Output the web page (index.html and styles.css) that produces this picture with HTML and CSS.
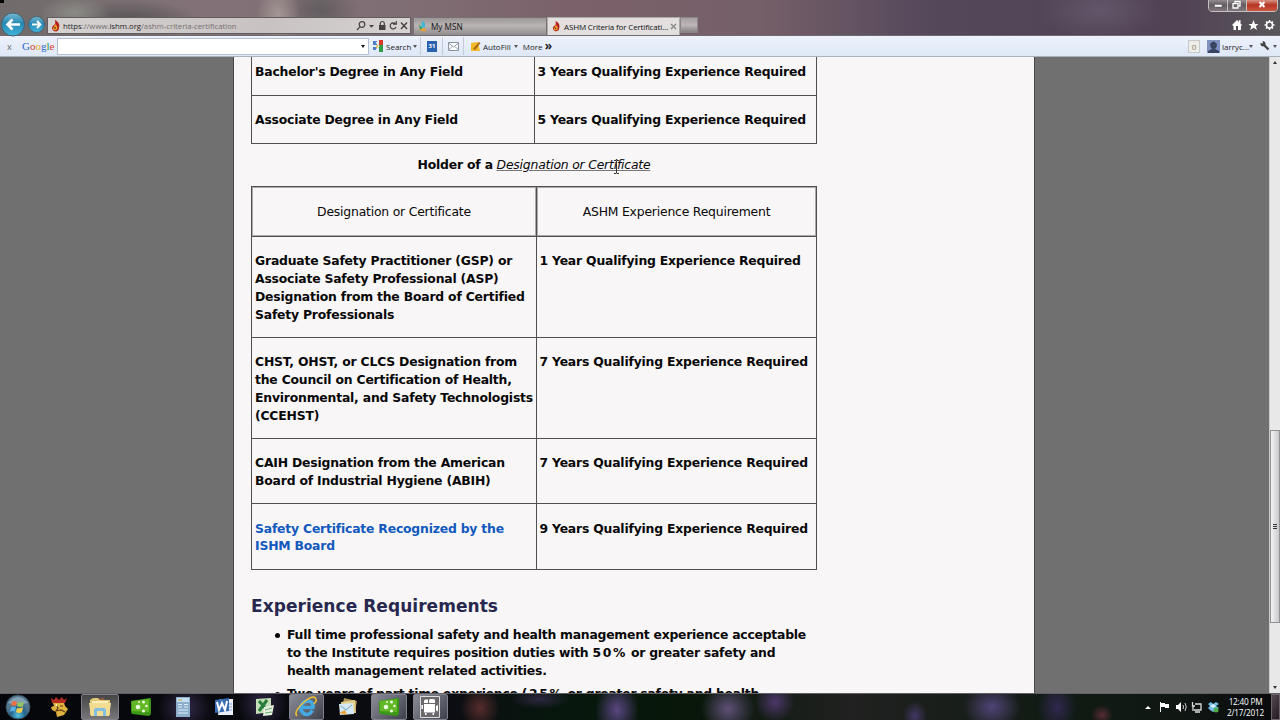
FILE: index.html
```html
<!DOCTYPE html>
<html lang="en">
<head>
    <meta charset="UTF-8">
    <title>ASHM Criteria for Certification</title>
    <link rel="stylesheet" href="styles.css">
</head>
<body>
    <svg class="defs" width="0" height="0">
        <symbol id="flame" viewBox="0 0 10 12">
            <path d="M4 0C8 2 9 5 8 8C8 11 5 12 3 11C0 9 1 6 3 5C5 4 4 2 4 0Z" fill="#b5221b"/>
            <path d="M4 4C7 6 7 10 5 10C2 11 1 8 3 7Z" fill="#f0a12c"/>
            <path d="M4 7L5 8L4 9L3 8Z" fill="#431613"/>
        </symbol>
        <symbol id="camtasia" viewBox="0 0 22 22">
            <path d="M1 5L20 2Q21 2 21 4V18L19 20L2 18Q1 17 1 15Z" fill="#3c9618"/>
            <path d="M2 5L19 3V16L2 15Z" fill="#63b827"/>
            <g fill="#e9f8dc"><circle cx="8" cy="11" r="2.3"/><circle cx="13.500" cy="6" r="1.5"/><circle cx="16.500" cy="10" r="1.3"/><circle cx="13.500" cy="15" r="1.6"/><circle cx="9" cy="6" r="1"/></g>
        </symbol>
    </svg>

    <div class="window">
        <header class="chrome">
            <div class="navbar">
                <svg class="history" width="47" height="25" viewBox="0 0 47 25">
                    <defs>
                        <linearGradient id="blue" x2="0" y2="1"><stop stop-color="#79b9d2"/><stop offset=".45" stop-color="#2489b4"/><stop offset="1" stop-color="#45b4d9"/></linearGradient>
                    </defs>
                    <circle cx="13" cy="12.5" r="11.5" fill="url(#blue)" stroke="#46616e"/>
                    <path d="M20 12.5H8M12.5 7.5L7.5 12.5L12.5 17.5" fill="none" stroke="#fff" stroke-width="2.6"/>
                    <circle cx="36.5" cy="12.5" r="8" fill="url(#blue)" stroke="#46616e"/>
                    <path d="M32 12.5H40M37 9L40.5 12.5L37 16" fill="none" stroke="#fff" stroke-width="1.9"/>
                </svg>
                <div class="address">
                    <svg class="favicon" width="10" height="12"><use href="#flame"/></svg>
                    <div class="url"><b>https</b>://www.<b>ishm.org</b>/ashm-criteria-certification</div>
                    <svg width="54" height="12" viewBox="0 0 54 12" fill="none" stroke="#454244" stroke-width="1.2">
                        <circle cx="6" cy="4.5" r="2.8"/><path d="M4 6.7L1 10"/>
                        <path d="M13 5h5l-2.5 2.7z" fill="#454244" stroke="none"/>
                        <rect x="23" y="5" width="6.5" height="5" fill="#454244" stroke="none"/><path d="M24.3 5V3.5a2 2 0 0 1 4 0V5"/>
                        <path d="M39.5 4A3 3 0 1 0 40 7M37 4.2H40.3V1"/>
                        <path d="M45 2.5L51 9M51 2.5L45 9" stroke-width="1.4"/>
                    </svg>
                </div>
                <div class="tab">
                    <svg width="10" height="12" viewBox="0 0 10 12"><path d="M5 6L1 9Q4 11 9 10L5 6Z" fill="#e4a033"/><path d="M4 0Q8 1 7 6L3 8Z" fill="#43b6d5"/><path d="M1 3L4 7L2 9Z" fill="#31a05c"/></svg>
                    <span>My MSN</span>
                </div>
                <div class="tab active">
                    <svg width="9" height="11"><use href="#flame"/></svg>
                    <span>ASHM Criteria for Certificati...</span>
                    <svg class="tab-close" width="7" height="7" viewBox="0 0 7 7"><path d="M1 1L6 6M6 1L1 6" stroke="#888" stroke-width="1.3"/></svg>
                </div>
                <div class="new-tab"></div>
                <svg class="browser-tools" width="43" height="14" viewBox="0 0 43 14" fill="#fff">
                    <path d="M0 7L5 2L7 4V2H8.5V5.5L10 7L9 8V12H6V8H4V12H1.5V8Z"/>
                    <path d="M21.5 2L23 6H26.5L23.8 8.2L25 12L21.5 9.8L18.2 12L19.2 8.2L16.5 6H20Z"/>
                    <circle cx="37.5" cy="7" r="3" fill="none" stroke="#fff" stroke-width="1.5"/>
                    <path d="M37.5 2V4M37.5 10V12M32.5 7H34.5M40.5 7H42.5M34 3.5L35.5 5M41 3.5L39.5 5M34 10.5L35.5 9M41 10.5L39.5 9" stroke="#fff" stroke-width="1.5"/>
                </svg>
                <div class="caption-buttons">
                    <i><svg width="18" height="11" viewBox="0 0 18 11"><path d="M5.5 4.5H13V7H5.5Z" fill="#fff" stroke="#555" stroke-width=".5"/></svg></i>
                    <i><svg width="18" height="11" viewBox="0 0 18 11" fill="none" stroke="#fff" stroke-width="1.3"><path d="M7 3V1.5H12V6H10.5"/><path d="M5 3.7H10V8H5Z"/></svg></i>
                    <i class="close"><svg width="30" height="11" viewBox="0 0 30 11"><path d="M12.5 2L17.5 7M17.5 2L12.5 7" stroke="#fff" stroke-width="2"/></svg></i>
                </div>
            </div>
            <div class="toolbar">
                <span class="toolbar-close">x</span>
                <span class="google"><b>G</b><b>o</b><b>o</b><b>g</b><b>l</b><b>e</b></span>
                <div class="search-box"><span class="caret dark"></span></div>
                <div class="tool search">
                    <svg width="12" height="12" viewBox="0 0 12 12"><path d="M1 1H5V5H1ZM1 7H5V10H1Z" fill="#4c7ccc"/><path d="M5 4H8V8H4Z" fill="#e8b840"/><path d="M7 0H11V5H7Z" fill="#d53b2c"/><path d="M7 5H11V12H7Z" fill="#2f9c4b"/><path d="M4 2L7 6L4 10" stroke="#fff" fill="none"/></svg>
                    <span>Search</span><span class="caret"></span>
                </div>
                <div class="tool calendar"><span>31</span></div>
                <div class="tool mail">
                    <svg width="11" height="9" viewBox="0 0 11 9" fill="#fff" stroke="#8995a3"><path d="M.5 .5H10.5V8.5H.5Z"/><path d="M.5 1L5.5 5L10.5 1M.5 8L4 4.5M10.5 8L7 4.5" fill="none"/></svg>
                </div>
                <div class="tool autofill">
                    <svg width="11" height="11" viewBox="0 0 11 11"><path d="M1 2L8 1L10 10H1Z" fill="#f4b929"/><path d="M3 8L9 1L10.5 2L5 9Z" fill="#a76916"/></svg>
                    <span>AutoFill</span><span class="caret"></span>
                </div>
                <div class="more">More <b>»</b></div>
                <span class="count">0</span>
                <svg class="avatar" width="13" height="13" viewBox="0 0 13 13"><path d="M0 0H13V13H0Z" fill="#7f91c0"/><path d="M3 4Q6.500 -1 10 4Q10 7 8 9L12 11V13H1V11L5 9Q3 7 3 4Z" fill="#39445f"/></svg>
                <span class="user">larryc...</span><span class="caret user-caret"></span>
                <svg class="wrench" width="10" height="10" viewBox="0 0 10 10"><path d="M3.500 3.500L8.500 8.500" stroke="#444" stroke-width="2.4"/><path d="M2.500 0L3 2.500L.5 2Q0 5 3 5.500Q6 5 5.500 2Q4.500 0 2.500 0Z" fill="#444"/></svg>
                <span class="caret"></span>
            </div>
        </header>

        <main class="viewport">
            <article class="page">
                <table class="degrees">
                    <tr><td>Bachelor's Degree in Any Field</td><td>3 Years Qualifying Experience Required</td></tr>
                    <tr><td>Associate Degree in Any Field</td><td>5 Years Qualifying Experience Required</td></tr>
                </table>
                <p class="holder"><b>Holder of a</b> <span class="underlined">Designation or Certificate<svg class="cursor" width="7" height="14" viewBox="0 0 7 14"><path d="M1 .5H3L3.500 1L4 .5H6M3.500 1V13M1 13.500H3L3.500 13L4 13.500H6" fill="none" stroke="#333"/></svg></span></p>
                <table class="designations">
                    <tr><th>Designation or Certificate</th><th>ASHM Experience Requirement</th></tr>
                    <tr class="tall"><td>Graduate Safety Practitioner (GSP) or<br>Associate Safety Professional (ASP)<br>Designation from the Board of Certified<br>Safety Professionals</td><td>1 Year Qualifying Experience Required</td></tr>
                    <tr class="tall"><td>CHST, OHST, or CLCS Designation from<br>the Council on Certification of Health,<br>Environmental, and Safety Technologists<br>(CCEHST)</td><td>7 Years Qualifying Experience Required</td></tr>
                    <tr class="short"><td>CAIH Designation from the American<br>Board of Industrial Hygiene (ABIH)</td><td>7 Years Qualifying Experience Required</td></tr>
                    <tr class="short"><td><a>Safety Certificate Recognized by the<br>ISHM Board</a></td><td>9 Years Qualifying Experience Required</td></tr>
                </table>
                <h2>Experience Requirements</h2>
                <ul>
                    <li>Full time professional safety and health management experience acceptable<br>to the Institute requires position duties with <span class="percent">50%</span> or greater safety and<br>health management related activities.</li>
                    <li>Two years of part time experience <span class="percent">(25%</span> or greater safety and health</li>
                </ul>
            </article>
            <div class="scrollbar">
                <span class="arrow up"></span>
                <div class="thumb"><i></i><i></i><i></i></div>
                <span class="arrow down"></span>
            </div>
        </main>

        <footer class="taskbar">
            <div class="start">
                <svg width="26" height="26" viewBox="0 0 26 26">
                    <defs><radialGradient id="orb" cy=".85"><stop stop-color="#58c4de"/><stop offset=".6" stop-color="#24638c"/><stop offset="1" stop-color="#54778f"/></radialGradient></defs>
                    <circle cx="13" cy="13" r="12" fill="url(#orb)" stroke="#314958"/>
                    <path d="M3 9Q13 -3 23 9Q13 12 3 9Z" fill="#b4cbd6" opacity=".5"/>
                    <path d="M7 8Q9 6 12 8L11 12Q9 11 6 12Z" fill="#ed7042"/><path d="M13 8Q16 10 19 8L18 12Q15 14 12 12Z" fill="#92c85a"/><path d="M6 13Q9 12 11 13L10 18Q8 16 5 18Z" fill="#5baee4"/><path d="M12 14Q15 15 18 13L17 18Q14 20 11 18Z" fill="#f5cd4c"/>
                </svg>
            </div>
            <nav class="apps">
                <div><svg width="20" height="22" viewBox="0 0 20 22"><path d="M4 7H15L16 10L19 13L15 19L8 21L7 16L3 14L2 11L5 10Z" fill="#deb33e"/><path d="M2 2L5 4L7 1L10 4L13 1L15 4L18 2L16 7H3Z" fill="#b52c20"/><path d="M7 9L9 12L7 15L12 14L16 16M11 10H14" stroke="#5e3a1b" stroke-width="1.2" fill="none"/><path d="M6 9L8 8V11Z" fill="#fff5d8"/></svg></div>
                <div class="open bright"><svg width="24" height="22" viewBox="0 0 24 22"><path d="M2 4L5 2H10L12 4H22V19H2Z" fill="#e3c775"/><path d="M4 5H20V9H4Z" fill="#fff0bd"/><path d="M1 7H23L21 20H3Z" fill="#f1dc91"/><path d="M6 20V14Q6 12 8 12H16Q18 12 18 14V20H15V15H9V20Z" fill="#82bfe0"/><path d="M12 3H16" stroke="#cf5e36"/></svg></div>
                <div><svg width="22" height="22"><use href="#camtasia"/></svg></div>
                <div><svg width="18" height="22" viewBox="0 0 18 22"><path d="M2 1H16V21H2Z" fill="#8caecb"/><path d="M3 2H15V6H3Z" fill="#c6e0f2"/><path d="M4 8.500H8M4 11H8M10 8.500H14M10 11H14M4 14H14M4 17H14" stroke="#dcecf8" stroke-width="1.2"/><path d="M4 4H8" stroke="#bc9b3b"/></svg></div>
                <div><svg width="20" height="20" viewBox="0 0 20 20"><path d="M6 2H19V18H4Z" fill="#e9f0f9"/><path d="M13 7H18M13 10H18M12 13H18" stroke="#82a4d0"/><path d="M1 3L15 1V14L1 16Z" fill="#386db2"/><path d="M3 5L5 13L8 6L11 13L13 4" stroke="#fff" stroke-width="2" fill="none"/></svg></div>
                <div><svg width="20" height="20" viewBox="0 0 20 20"><path d="M1 2L16 1V15L1 17Z" fill="#c3ddb8"/><path d="M4 4L13 14M12 3L4 14" stroke="#267c39" stroke-width="3"/><path d="M9 10L19 8L17 18L8 19Z" fill="#e6f1df"/><path d="M10 13L17 11M10 16L17 15" stroke="#67a773"/></svg></div>
                <div class="open"><svg width="24" height="22" viewBox="0 0 24 22"><path d="M18.500 14.500Q14 21 9 17Q4 12 9 7Q14 3 18 7Q19.500 9 19 11.500H8" stroke="#43a9e2" stroke-width="3.600" fill="none"/><path d="M3 20Q-1 16 10 6Q20 -2 22 3Q23 5 20 8" stroke="#edbc35" stroke-width="1.600" fill="none"/></svg></div>
                <div><svg width="22" height="20" viewBox="0 0 22 20"><path d="M7 1L20 4L18 15L5 12Z" fill="#ae945c"/><path d="M4 5L18 3L19 16L5 17Z" fill="#e5cf85"/><path d="M2 7L16 6L17 17L3 18Z" fill="#d4e8f5"/><path d="M4 9L9 13L15 8" stroke="#7c9fb8" fill="none"/><path d="M2 16L8 13L10 18Z" fill="#e9a73d"/></svg></div>
                <div class="open"><svg width="22" height="22"><use href="#camtasia"/></svg></div>
                <div class="open"><svg width="22" height="22" viewBox="0 0 22 22"><path d="M1.500 .5H20.500V21.500H1.500Z" fill="#6b696c" stroke="#ddd"/><path d="M5 8H16V16.500H5ZM17 10L19 9V15.500L17 14.500ZM2.500 9H4V13H2.500ZM6 17V19H7.500V17M13.500 17V19H15V17" fill="#fff"/><path d="M5 7V5Q5 3.500 6.500 3.500H9V7ZM10 7V4.500Q10 3 11.500 3H14.500Q16 3 16 4.500V7Z" fill="#fff"/></svg></div>
            </nav>
            <svg class="tray" width="76" height="14" viewBox="0 0 76 14">
                <path d="M1 9L4 6L7 9Z" fill="#fff"/>
                <path d="M16.500 2V12" stroke="#fff"/><path d="M17 3H21V4H25V8H21V7H17Z" fill="#fff"/>
                <path d="M32 5H34L37 2V12L34 9H32Z" fill="#fff"/><path d="M39 5Q40 7 39 9M41 3Q43.500 7 41 11" fill="none" stroke="#ccc"/>
                <path d="M51 4H57V10H50M48.500 2V6H51M49 6V11M51 12H56" fill="none" stroke="#ddd" stroke-width="1.300"/>
                <path d="M64 4L67 2L69 4L72 2L75 4L72 6L75 8L72 10L69 12L66 10L64 8L66 6Z" fill="#72bce8"/><path d="M69 4L66 6L69 8L72 6Z" fill="#d8efff"/><circle cx="72" cy="10" r="2.500" fill="#50ac48"/>
            </svg>
            <div class="clock">12:40 PM<br>2/17/2012</div>
            <div class="show-desktop"></div>
        </footer>
    </div>
</body>
</html>
```
FILE: styles.css
```css
* {
    box-sizing: border-box;
}
body {
    margin: 0;
    font-family: "Open Sans", "Noto Sans", sans-serif;
    overflow: hidden;
}
svg {
    display: block;
    flex: none;
}
.defs {
    position: absolute;
}
.window {
    width: 1280px;
    height: 720px;
    display: flex;
    flex-direction: column;
}

/* browser chrome */
.chrome {
    height: 57px;
    flex: none;
    background:
        linear-gradient(#000, #000) 0 0 / 4px 3px no-repeat,
        radial-gradient(ellipse 22px 30px at 278px 15px, #a39694, transparent),
        radial-gradient(ellipse 35px 17px at 75px 13px, #8b8b86, transparent),
        radial-gradient(ellipse 70px 20px at 130px 20px, #565356, transparent),
        radial-gradient(ellipse 40px 25px at 320px 10px, #615c5f, transparent),
        radial-gradient(ellipse 60px 30px at 1100px 10px, #62566a, transparent),
        linear-gradient(90deg, #706b6a, #827277 200px, #806e75 400px, #7b6169 580px, #755f69 760px, #53475a 940px, #514354 1180px, #59565a 1280px);
}
.navbar {
    height: 36px;
    padding-top: 17px;
    display: flex;
    position: relative;
    border-bottom: 1px solid #706b70;
}
.history {
    margin-top: -5px;
}
.address {
    width: 364px;
    height: 17px;
    display: flex;
    align-items: center;
    padding: 0 0 0 3px;
    background: linear-gradient(90deg, #d6d2d2, #c8c2c2 60%, #d7d3d2);
    border: 1px solid #625d5f;
    color: #75706f;
}
.favicon {
    margin-right: 2px;
}
.url {
    flex: 1;
    white-space: nowrap;
    font-size: 7.8px;
    letter-spacing: -.03px;
}
.url b {
    font-weight: 500;
    color: #222;
}
.tab {
    width: 134px;
    height: 18px;
    margin-left: 2px;
    padding-left: 4px;
    display: flex;
    align-items: center;
    gap: 3px;
    background: linear-gradient(#9b9797, #bab5b5 45%, #918b8d);
    border: 1px solid #777174;
    border-bottom: 0;
    font-size: 8.2px;
    color: #111;
    white-space: nowrap;
}
.tab.active {
    width: 133px;
    margin-left: 0;
    background: #e3dfdf;
    border-color: #aaa;
    font-size: 8px;
    letter-spacing: -.15px;
}
.tab-close {
    margin-left: -1px;
}
.new-tab {
    width: 18px;
    height: 16px;
    background: linear-gradient(#a69fa2, #bdb6b8 50%, #8b8285);
    border: 1px solid #8c8588;
}
.browser-tools {
    margin-left: auto;
    margin-right: 5px;
    margin-top: 1px;
}
.caption-buttons {
    position: absolute;
    top: -1px;
    right: 2px;
    height: 13px;
    display: flex;
    border: 1px solid #c6bebf;
    border-radius: 0 0 4px 4px;
    overflow: hidden;
}
.caption-buttons i {
    background: linear-gradient(#938c90, #625b60 45%, #82797d);
    border-right: 1px solid #c6bebf;
}
.caption-buttons .close {
    background: linear-gradient(#d79488, #b73522 45%, #cb5941);
    border-right: 0;
}
.toolbar {
    height: 21px;
    display: flex;
    align-items: center;
    background: linear-gradient(#edf2fb, #dfe8f7);
    border-bottom: 1px solid #a9b1be;
    font-size: 8px;
    color: #222;
    padding-right: 3px;
}
.toolbar-close {
    width: 22px;
    padding-left: 7px;
    font-size: 9px;
    color: #666;
}
.google {
    width: 35px;
    font: 11px/14px "Liberation Serif", serif;
}
.google b {
    font-weight: 400;
    color: #2967c8;
}
.google b:nth-child(2),
.google b:nth-child(6) {
    color: #d33d33;
}
.google b:nth-child(3) {
    color: #e5ab20;
}
.google b:nth-child(5) {
    color: #26914b;
}
.search-box {
    width: 312px;
    height: 17px;
    background: #fff;
    border: 1px solid #b5c0d3;
    display: flex;
    align-items: center;
    justify-content: flex-end;
    padding-right: 3px;
}
.caret {
    border: 2px solid transparent;
    border-top: 3px solid #555;
    border-bottom: 0;
}
.caret.dark {
    border-top-color: #111;
}
.tool {
    height: 18px;
    display: flex;
    align-items: center;
    gap: 4px;
    border-right: 1px solid #c3cbda;
}
.search {
    width: 52px;
    padding-left: 3px;
    gap: 2px;
}
.calendar {
    width: 22px;
    padding-left: 6px;
}
.calendar span {
    width: 10px;
    height: 11px;
    background: #2861ae;
    color: #fff;
    font: bold 6px/11px "Open Sans", sans-serif;
    text-align: center;
}
.mail {
    width: 21px;
    padding-left: 5px;
}
.autofill {
    padding-left: 6px;
    gap: 2px;
    border-right: 0;
}
.autofill .caret {
    margin-left: 1px;
}
.more {
    margin-left: 5px;
}
.more b {
    font-size: 12px;
    line-height: 8px;
}
.count {
    width: 12px;
    height: 13px;
    margin-left: auto;
    margin-right: 7px;
    border: 1px solid #c8c9c9;
    background: #eeede9;
    color: #898466;
    line-height: 11px;
    text-align: center;
}
.user {
    width: 27px;
    margin-left: 2px;
}
.user-caret {
    margin-right: 7px;
}
.wrench {
    margin-right: 3px;
}

/* web page */
.viewport {
    height: 636px;
    flex: none;
    display: flex;
    background: #707070;
    overflow: hidden;
}
.page {
    width: 802px;
    height: 636px;
    margin-left: 233px;
    padding-left: 17px;
    background: #f8f6f7;
    border-left: 1px solid #484848;
    border-right: 1px solid #484848;
    font: 12.4px/17.8px "DejaVu Sans", sans-serif;
    letter-spacing: -.2px;
    color: #080808;
    overflow: hidden;
}
table {
    width: 566px;
    border-collapse: collapse;
    table-layout: fixed;
}
td,
th {
    padding: 15.4px 0 0 3px;
    border: 1px solid #505052;
    vertical-align: top;
    white-space: nowrap;
}
td {
    font-weight: 700;
}
td + td {
    padding-left: 2.5px;
}
.degrees {
    margin-top: -10px;
}
.degrees td {
    height: 48px;
}
.degrees td:first-child {
    width: 283px;
}
.holder {
    width: 566px;
    margin: 12.4px 0 11.6px;
    text-align: center;
}
.underlined {
    position: relative;
    font-style: italic;
    text-decoration: underline;
    text-decoration-color: #777;
}
.cursor {
    position: absolute;
    left: 116px;
    top: 3px;
}
.designations th {
    height: 50px;
    padding-top: 16px;
    font-weight: 400;
    box-shadow: inset 0 0 0 1px #aaa;
    padding-left: 0;
    text-align: center;
}
.designations th:first-child {
    width: 285px;
}
.tall td {
    height: 101px;
}
.short td {
    height: 65.5px;
}
a {
    color: #1159bd;
}
h2 {
    margin: 24.5px 0 8px;
    font-size: 17px;
    line-height: 24px;
    letter-spacing: .05px;
    color: #28284f;
}
ul {
    margin: 0;
    padding-left: 36px;
    font-weight: 700;
    letter-spacing: -.24px;
    list-style: none;
}
li {
    white-space: nowrap;
    margin-bottom: 5px;
}
li::before {
    content: "";
    float: left;
    width: 5px;
    height: 5px;
    margin: 7px 7px 0 -12px;
    border-radius: 50%;
    background: #080808;
}
.percent {
    letter-spacing: 1.6px;
}
.scrollbar {
    width: 11px;
    height: 636px;
    margin-left: auto;
    display: flex;
    flex-direction: column;
    align-items: center;
    background: #e8e8e9;
    border-left: 1px solid #ccc;
}
.arrow {
    border: 2.5px solid transparent;
}
.arrow.up {
    margin-top: 2px;
    border-bottom: 3px solid #333;
}
.thumb {
    width: 10px;
    height: 193px;
    margin-top: 366px;
    display: flex;
    flex-direction: column;
    align-items: center;
    justify-content: center;
    gap: 1px;
    background: linear-gradient(90deg, #f2f2f3, #cacacd);
    border: 1px solid #929294;
}
.thumb i {
    width: 4px;
    height: 1px;
    background: #333;
}
.arrow.down {
    margin-top: auto;
    margin-bottom: 2px;
    border-top: 3px solid #333;
}

/* taskbar */
.taskbar {
    height: 27px;
    flex: none;
    display: flex;
    align-items: center;
    border-top: 1px solid #626064;
    background:
        radial-gradient(ellipse 28px 24px at 185px 14px, #342849, transparent),
        radial-gradient(ellipse 25px 25px at 262px 10px, #302746, transparent),
        radial-gradient(ellipse 20px 22px at 480px 14px, #572c2d, transparent),
        radial-gradient(ellipse 30px 10px at 540px 5px, #2d2740, transparent),
        radial-gradient(ellipse 22px 28px at 617px 16px, #594681, transparent),
        radial-gradient(ellipse 27px 26px at 728px 15px, #5e5077, transparent),
        radial-gradient(ellipse 20px 20px at 775px 8px, #4c366a, transparent),
        radial-gradient(ellipse 12px 15px at 915px 22px, #413663, transparent),
        radial-gradient(ellipse 29px 24px at 992px 13px, #514477, transparent),
        radial-gradient(ellipse 20px 25px at 1057px 13px, #30284f, transparent),
        radial-gradient(ellipse 11px 10px at 1102px 21px, #572a36, transparent),
        linear-gradient(90deg, #050609, #0b0d12 450px, #07170d 560px, #081709 690px, #202120 850px, #101b13 1060px, #101713 1180px, #08090b);
}
.start {
    width: 38px;
    padding-left: 5px;
}
.apps {
    height: 26px;
    display: grid;
    grid-template-columns: repeat(10, 41.3px);
}
.apps div {
    display: flex;
    align-items: center;
    justify-content: center;
}
.apps .open {
    margin: 0 3px;
    background: linear-gradient(135deg, #8b8d98, #3e404b);
    border: 1px solid #7f818b;
    border-radius: 2px;
}
.apps .bright {
    margin: 0 2px;
    background: linear-gradient(#454548, #77777a);
}
.tray {
    margin-left: auto;
}
.clock {
    width: 51px;
    font-size: 8.2px;
    line-height: 11px;
    letter-spacing: -.2px;
    color: #fff;
    text-align: center;
}
.show-desktop {
    width: 9px;
    height: 26px;
    background: linear-gradient(120deg, #554a51, #211820);
    border: 1px solid #6d646a;
}
```
